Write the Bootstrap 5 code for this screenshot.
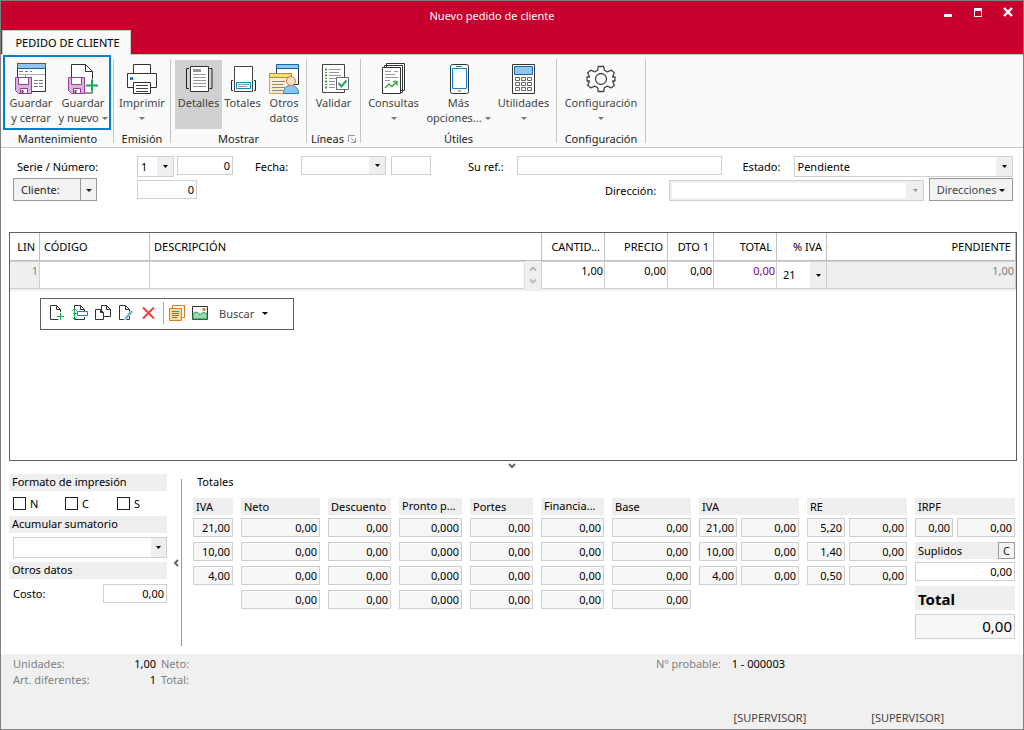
<!DOCTYPE html>
<html lang="es">
<head>
<meta charset="utf-8">
<meta name="viewport" content="width=device-width, initial-scale=1">
<title>Nuevo pedido de cliente</title>
<link href="https://cdn.jsdelivr.net/npm/bootstrap@5.3.0/dist/css/bootstrap.min.css" rel="stylesheet">
<style>
:root{--arrow:url("data:image/svg+xml,%3Csvg xmlns='http://www.w3.org/2000/svg' width='5' height='3'%3E%3Cpath d='M0 0h5L2.5 3z' fill='%23000'/%3E%3C/svg%3E");
--arrow-off:url("data:image/svg+xml,%3Csvg xmlns='http://www.w3.org/2000/svg' width='5' height='3'%3E%3Cpath d='M0 0h5L2.5 3z' fill='%23999'/%3E%3C/svg%3E")}
body{font:11px/15px "Noto Sans","Open Sans",sans-serif;color:#000;background:#fff}
svg{display:block;flex:none}
.app-window{border:1px solid #808080}
.title-bar{background:#c8002d;height:53px;color:#fff}
.title-bar h1{font-size:11px;line-height:15px;padding-left:50px;margin:7px 0 0}
.win-btn{width:30px;height:24px;border:0;background:none;padding:0;color:#fff}
.tab-btn{border:1px solid #c8c8c8;border-bottom:0;background:#fafafa;width:129px;height:25px;padding:0 0 2px 2px;margin-left:1px;margin-bottom:-1px;font-size:11px;position:relative}
.ribbon{background:#fafafa;border-top:1px solid #c6c6c6;border-bottom:1px solid #c6c6c6;height:94px;padding-left:1px}
.ribbon-sep{width:1px;background:#c6c6c6;margin:4px 0}
.ribbon-group{display:flex;flex-direction:column;justify-content:space-between}
.group-name{text-align:center;line-height:15px;color:#222;margin-bottom:1px}
.rb{border:0;background:none;padding:3px 0 0;margin-top:5px;height:69px;display:flex;flex-direction:column;align-items:center;color:#444;line-height:15px;white-space:nowrap}
.rb.on{background:#d0d0d0}
.hilite{border:2px solid #0082c8;display:flex;height:75px;margin:0 2px 0 1px}
.hilite .rb{margin-top:3px;width:52px}
.caret{display:inline-block;border:3px solid transparent;border-top-color:currentColor;border-bottom:0;vertical-align:2px}
.rb .caret{color:#777}
.fld{border:1px solid #d0d0d0;border-radius:0;background:#fff;height:19px;padding:0 2px 1px;font-size:11px;line-height:15px;color:#000;min-width:0;width:100%}
.num{text-align:right}
select.fld{appearance:none;height:21px;padding:0 16px 0 3px;background:var(--arrow) no-repeat right 5px center,linear-gradient(#efefef,#efefef) no-repeat right/16px 100%,#fff;opacity:1}
select.short{height:19px}
select.off{background:var(--arrow-off) no-repeat right 5px center,linear-gradient(#efefef,#efefef) no-repeat right/17px 100%,#fff;box-shadow:inset 0 0 0 2px #efefef}
.gray-btn{border:1px solid #999;background:#f3f3f3;padding:0;height:23px;color:#222;font-size:11px}
.first-col{width:124px}
.order-head label{padding-top:3px;white-space:nowrap}
.w37{width:37px}.w40{width:40px}.w56{width:56px}.w60{width:60px}.w85{width:85px}
.grow-fld{flex:1 1 0}
.grid-box{border:1px solid #606060;margin:0 6px 0 8px}
.lines{width:100%;table-layout:fixed;border-collapse:separate;border-spacing:0;border-bottom:2px solid #efefef}
.lines th{font-weight:400;height:28px;padding:0 4px 1px;border-right:1px solid #c0c0c0;border-bottom:1px solid #c0c0c0;white-space:nowrap;overflow:hidden;text-overflow:ellipsis}
.lines td{padding:0;height:28px;border-right:1px solid #d0d0d0}
.lines .fld{height:28px;display:block;border-width:1px 0 1px 0;padding-bottom:10px}
.lines input.num{padding-right:1px}
.lines select.fld{border-width:1px 0 1px 0;padding:0 16px 2px 6px}
.read{background:#efefef!important;color:#808080}
.spin{width:16px;background:#efefef}
.tool-strip{border:1px solid #606060;width:254px;height:32px;margin:7px 0 0 30px;padding:0 8px 2px;gap:7px}
.tool-strip button{border:0;background:none;padding:0;color:#444}
.bar-head{background:#eee;height:17px;line-height:15px;padding:0 3px;white-space:nowrap;overflow:hidden;text-overflow:ellipsis}
.low{line-height:18px}
.lower{min-height:184px;padding:4px 8px 8px}
.side{width:158px}
.side .check-box{appearance:none;width:13px;height:13px;border:1px solid #222;background:#fff;margin:0;border-radius:0}
.side .check-box:checked{background:#222}
.side label.opt{width:52px;gap:4px;flex:none}
.divider{width:15px;border-right:1px solid #999;margin-top:5px}
.divider button,.fold{border:0;background:none;padding:0}
.totals-grid{display:grid;grid-template-columns:40fr 79fr 63fr 63fr 63fr 63fr 79fr 100fr 100fr 100fr;column-gap:8px;margin-top:9px}
.tcol{display:grid;grid-template-rows:15px;grid-auto-rows:19px;row-gap:5px;align-content:start;min-width:0}
.tcol.irpf{grid-template-rows:15px 19px 15px 19px 23px 25px}
.tcol .fld{background:#f7f7f7;border-color:#d0d0d0}
.pair{display:grid;grid-template-columns:38fr 58fr;column-gap:4px}
.irpf .fld.open{background:#fff}
.status{background:#f0f0f0;height:75px;color:#808080}
.status b{font-weight:400;color:#000}
.stat-grid{display:grid;grid-template-columns:76px 62px auto;column-gap:5px;line-height:16px}
</style>
</head>
<body>
<div class="app-window min-vh-100 d-flex flex-column">
<header class="title-bar d-flex flex-column justify-content-between">
  <div class="d-flex">
    <h1 class="flex-grow-1 text-center fw-normal mb-0">Nuevo pedido de cliente</h1>
    <button class="win-btn" aria-label="Minimizar"><svg width="30" height="24"><path d="M11 13h8v3h-8z" fill="#fff"/></svg></button>
    <button class="win-btn" aria-label="Maximizar"><svg width="30" height="24"><path d="M11 7h8v9h-8zM12 10v5h6v-5z" fill="#fff" fill-rule="evenodd"/></svg></button>
    <button class="win-btn" aria-label="Cerrar"><svg width="30" height="24"><path d="M11 7l8 8M19 7l-8 8" stroke="#fff" stroke-width="2.4"/></svg></button>
  </div>
  <div><button class="tab-btn">PEDIDO DE CLIENTE</button></div>
</header>

<svg width="0" height="0" class="position-absolute"><defs>
  <g id="floppy"><path d="M.5.5h16v16H3.500L.5 13.500z" fill="#d9b3dc" stroke="#953f98"/><path d="M3.500.5h10v7h-10z" fill="#fff" stroke="#953f98"/><path d="M5.500 11.500h7v5h-7z" fill="#fff" stroke="#953f98"/><path d="M6.500 13h2v3h-2z" fill="#555"/></g>
  <g id="leaf"><path d="M.5 14.500V.5h6l4 4v10zM6.500.5v4h4" fill="#fff" stroke="#333"/></g>
</defs></svg>

<nav class="ribbon d-flex" aria-label="Cinta">
  <div class="ribbon-group">
    <div class="hilite">
      <button class="rb"><svg class="ico" width="32" height="32"><path d="M2.500.5h28v28h-28z" fill="#fff" stroke="#333"/><path d="M2.500.5h28v5h-28z" fill="#92c5ee" stroke="#1466ae"/><path d="M4 8.500h4m2 0h3m2 0h2M19 17.500h10M19 20.500h10M19 23.500h10" stroke="#777" stroke-dasharray="4 1"/><path d="M4 11.500h26M10.500 11v4" stroke="#aaa"/><use href="#floppy" y="14"/></svg>Guardar<br><span>y cerrar</span></button>
      <button class="rb"><svg class="ico" width="32" height="32"><path d="M4.500 15V1.500h14l7 7V30H18" fill="#fff" stroke="#333"/><path d="M18.500 1.500v7h7" fill="none" stroke="#333"/><use href="#floppy" x="1" y="14"/><path d="M18 22.500h13M24.500 16v13" stroke="#fafafa" stroke-width="5"/><path d="M19 22.500h12M25 16.500v12" stroke="#1ba85a" stroke-width="2"/></svg>Guardar<br><span>y nuevo <i class="caret"></i></span></button>
    </div>
    <div class="group-name">Mantenimiento</div>
  </div><div class="ribbon-sep"></div>
  <div class="ribbon-group" style="width:56px">
    <button class="rb"><svg class="ico" width="32" height="32"><path d="M7.500 10.500v-9h17v9M7.500 24.500h-6v-14h29v14h-6" fill="#fff" stroke="#333"/><path d="M7.500 19.500h17v11h-17z" fill="#fff" stroke="#333"/><path d="M10 22.500h12M10 25.500h12M10 28.500h12" stroke="#444"/><path d="M4 14h3v3H4z" fill="#1783d0"/></svg>Imprimir<br><span><i class="caret"></i></span></button>
    <div class="group-name">Emisión</div>
  </div><div class="ribbon-sep"></div>
  <div class="ribbon-group">
    <div class="d-flex" style="padding:0 1px 0 4px">
      <button class="rb on" style="width:47px"><svg class="ico" width="32" height="32"><path d="M7.500 3.500h18v25h-18z" fill="#fff" stroke="#333"/><path d="M10 6h8v3h-8z" fill="#999"/><path d="M10 11.500h13M10 14.500h13M10 17.500h13M10 20.500h13M10 23.500h13" stroke="#999"/><path d="M6 5.500H3.500v20H6M26.500 5.500h2.500v20h-2.500" fill="none" stroke="#222"/></svg>Detalles</button>
      <button class="rb" style="width:41px"><svg class="ico" width="32" height="32"><path d="M7.500 3.500h18v25h-18z" fill="#fff" stroke="#444"/><path d="M9.500 19.500h14v6h-14z" fill="#fff" stroke="#0090d0"/><path d="M11 21.500h11M11 23.500h9" stroke="#999"/><path d="M6 17.500H4.500v10H6M27 17.500h1.500v10H27" fill="none" stroke="#222"/></svg>Totales</button>
      <button class="rb" style="width:42px"><svg class="ico" width="32" height="32"><path d="M8.500 1.500h22v20h-22z" fill="#fff" stroke="#333"/><path d="M8.500 1.500h22v4h-22z" fill="#92c5ee" stroke="#1466ae"/><path d="M1.500 10.500h22v20h-22z" fill="#fcefd0" stroke="#d8a450"/><path d="M1.500 10.500h22v4h-22z" fill="#ffd978" stroke="#e07b20"/><path d="M4 18.500h13M4 21.500h11M4 24.500h13M4 27.500h11" stroke="#888"/><path d="M15.500 30.500c0-5 3-8 7.500-8s7.500 3 7.500 8z" fill="#92c5ee" stroke="#1783d0"/><circle cx="23" cy="18" r="4.500" fill="#f9ddc4" stroke="#d17a3a"/></svg>Otros<br><span>datos</span></button>
    </div>
    <div class="group-name">Mostrar</div>
  </div><div class="ribbon-sep"></div>
  <div class="ribbon-group" style="width:53px">
    <button class="rb"><svg class="ico" width="32" height="32"><path d="M4.500 1.500h22v28h-22z" fill="#fff" stroke="#444"/><path d="M7 6.500h2M7 12.500h2M7 18.500h2M7 24.500h2" stroke="#2ea836" stroke-width="2"/><path d="M7 9.500h2M7 15.500h2M7 21.500h2" stroke="#e04040"/><path d="M11 6.500h12M11 9.500h10M11 12.500h12M11 15.500h8M11 18.500h6M11 21.500h6M11 24.500h6" stroke="#999"/><path d="M18.500 14.500h12v12h-12z" fill="#fff" stroke="#666"/><path d="M20.500 20l3 3.500 5-6" fill="none" stroke="#1ba85a" stroke-width="2"/></svg>Validar</button>
    <div class="group-name d-flex justify-content-center align-items-center gap-1">Líneas <svg width="8" height="8"><path d="M.5 7V.5H7M7.500 3v4.500H3M3 3l4 4" fill="none" stroke="#999"/></svg></div>
  </div><div class="ribbon-sep"></div>
  <div class="ribbon-group" style="width:195px">
    <div class="d-flex">
      <button class="rb" style="width:65px"><svg class="ico" width="32" height="32"><path d="M8.500.5h18v27h-18z M6.500 2.500h18v27h-18z" fill="#fff" stroke="#333"/><path d="M4.500 4.500h18v26h-18z" fill="#fff" stroke="#333"/><path d="M7 8.500h6m3 0h4M7 11.500h10M7 14.500h13M7 17.500h5" stroke="#999"/><path d="M7 25l4-4 3 2.500 5-5M15 18.500h4v4" fill="none" stroke="#3bae3b" stroke-width="1.500"/></svg>Consultas<br><span><i class="caret"></i></span></button>
      <button class="rb" style="width:65px"><svg class="ico" width="32" height="32"><rect x="7.500" y="1.500" width="18" height="29" rx="2" fill="#fff" stroke="#333"/><path d="M9.500 5.500h14v20h-14z" fill="#fff" stroke="#1783d0"/><path d="M13 3.500h6M15 28h3" stroke="#666"/></svg>Más<br><span>opciones... <i class="caret"></i></span></button>
      <button class="rb" style="width:65px"><svg class="ico" width="32" height="32"><path d="M4.500 1.500h22v29h-22z" fill="#fff" stroke="#333"/><path d="M6.500 3.500h18v8h-18z" fill="#92c5ee" stroke="#1466ae"/><g fill="none" stroke="#666"><path d="M7.500 14.500h4v3h-4zM13.500 14.500h4v3h-4zM19.500 14.500h4v3h-4zM7.500 19.500h4v3h-4zM13.500 19.500h4v3h-4zM19.500 19.500h4v3h-4zM7.500 24.500h4v3h-4zM13.500 24.500h4v3h-4zM19.500 24.500h4v3h-4z"/></g></svg>Utilidades<br><span><i class="caret"></i></span></button>
    </div>
    <div class="group-name">Útiles</div>
  </div><div class="ribbon-sep"></div>
  <div class="ribbon-group" style="width:88px">
    <button class="rb"><svg class="ico" width="32" height="32"><path d="M12.700 7.200L13.200 3.500h5.600l.5 3.700 3 1.700 4-1.700 3 2.600-1.800 4.200H30v4h-2.500l1.800 4.200-3 2.600-4-1.700-3 1.700-.5 3.700h-5.600l-.5-3.700-3-1.700-4 1.700-3-2.600L4.500 18H2v-4h2.500L2.700 9.800l3-2.600 4 1.700z" fill="#fff" stroke="#444" stroke-width="1.300" stroke-linejoin="round"/><circle cx="16" cy="16" r="5.500" fill="#fafafa" stroke="#444" stroke-width="1.300"/></svg>Configuración<br><span><i class="caret"></i></span></button>
    <div class="group-name">Configuración</div>
  </div><div class="ribbon-sep"></div>
</nav>

<main class="flex-grow-1 d-flex flex-column">
<form class="order-head" style="padding:8px 10px 0 12px">
  <div class="d-flex align-items-start" style="height:22px">
    <label for="serie" class="first-col ps-1">Serie / Número:</label>
    <select id="serie" class="fld w37 flex-shrink-0"><option>1</option></select>
    <input class="fld num w56 flex-shrink-0" style="margin-left:3px" value="0" aria-label="Número">
    <label for="fecha" class="flex-shrink-0" style="width:68px;padding-left:22px">Fecha:</label>
    <select id="fecha" class="fld short w85 flex-shrink-0"><option></option></select>
    <input class="fld w40 flex-shrink-0" style="margin-left:5px" aria-label="Hora">
    <label for="ref" class="flex-shrink-0" style="width:86px;padding-left:37px">Su ref.:</label>
    <input id="ref" class="fld grow-fld">
    <label for="estado" class="flex-shrink-0" style="width:72px;padding-left:21px">Estado:</label>
    <select id="estado" class="fld grow-fld"><option>Pendiente</option></select>
  </div>
  <div class="d-flex align-items-start">
    <div class="first-col"><div class="d-flex">
      <button type="button" class="gray-btn" style="width:68px;text-align:left;padding-left:7px">Cliente:</button>
      <button type="button" class="gray-btn border-start-0" style="width:16px" aria-label="Abrir cliente"><i class="caret"></i></button></div></div>
    <input class="fld num w60" style="margin-top:2px" value="0" aria-label="Código de cliente">
    <label for="dir" class="ms-auto mt-1" style="width:64px;padding-top:1px">Dirección:</label>
    <select id="dir" class="fld off" style="width:255px;margin-top:2px" disabled><option></option></select>
    <button type="button" class="gray-btn" style="width:84px;margin-left:5px;color:#444">Direcciones <i class="caret text-black"></i></button>
  </div>
</form>

<section class="grid-box flex-grow-1" style="margin-top:31px">
  <table class="lines">
    <colgroup><col style="width:30px"><col style="width:110px"><col><col style="width:63px"><col style="width:63px"><col style="width:46px"><col style="width:63px"><col style="width:50px"><col style="width:189px"></colgroup>
    <thead><tr><th class="text-end">LIN</th><th>CÓDIGO</th><th>DESCRIPCIÓN</th><th class="text-end">CANTID...</th><th class="text-end">PRECIO</th><th class="text-end">DTO 1</th><th class="text-end">TOTAL</th><th class="text-end">% IVA</th><th class="text-end">PENDIENTE</th></tr></thead>
    <tbody><tr>
      <td><input class="fld num read" value="1" readonly aria-label="Línea"></td>
      <td><input class="fld" aria-label="Código"></td>
      <td><div class="d-flex"><input class="fld border-end" aria-label="Descripción"><div class="spin"><svg width="16" height="28"><path d="M5 9.500l3-3 3 3M5 18.500l3 3 3-3" fill="none" stroke="#bbb" stroke-width="2"/></svg></div></div></td>
      <td><input class="fld num" value="1,00" aria-label="Cantidad"></td>
      <td><input class="fld num" value="0,00" aria-label="Precio"></td>
      <td><input class="fld num" value="0,00" aria-label="Descuento 1"></td>
      <td><input class="fld num" style="color:#800080" value="0,00" aria-label="Total"></td>
      <td><select class="fld" aria-label="IVA"><option>21</option></select></td>
      <td><input class="fld num read" value="1,00" readonly aria-label="Pendiente"></td>
    </tr></tbody>
  </table>
  <div class="tool-strip d-flex align-items-center">
    <button aria-label="Nueva línea"><svg width="16" height="16"><use href="#leaf" x="1"/><path d="M7 11.500h9M11.500 7v9" stroke="#fff" stroke-width="4"/><path d="M8 11.500h7M11.500 8v7" stroke="#1ba85a"/></svg></button>
    <button aria-label="Insertar línea"><svg width="16" height="16"><path d="M2.500 6V.5h6l4 4V7M2.500 9v5.500h10V12M8.500.5v4h4" fill="#fff" stroke="#333"/><path d="M5.500 6.500h10v4h-10z" fill="#fff" stroke="#1783d0"/><path d="M2.500 3v11M.5 5.500l2-2 2 2M.5 12.500l2 2 2-2M1 8.500h4" fill="none" stroke="#1ba85a"/></svg></button>
    <button aria-label="Duplicar línea"><svg width="16" height="16"><path d="M6.500 11.500V.5h5l4 4v7zM11.500.5v4h4" fill="#fff" stroke="#333"/><path d="M.5 14.500v-10h5l3 3v7zM5.500 4.500v3h3" fill="#fff" stroke="#333"/></svg></button>
    <button aria-label="Modificar línea"><svg width="16" height="16"><use href="#leaf" x="1"/><path d="M6 15l1-3 6-7 2 2-6 7z" fill="#62a9e4" stroke="#fff" stroke-width=".6"/></svg></button>
    <button aria-label="Eliminar línea"><svg width="16" height="16"><path d="M2 2.500l11 11M13 2.500l-11 11" stroke="#ee3e3e" stroke-width="2"/></svg></button>
    <div style="width:1px;height:22px;background:#aaa;margin-left:-1px"></div>
    <button aria-label="Detalle" style="margin-left:-2px"><svg width="16" height="16"><path d="M3.500 3V.5h12v12H13" fill="none" stroke="#e07b20"/><path d="M.5 3.500h12v12H.5z" fill="#fcdc8a" stroke="#e07b20"/><path d="M3 6.500h7M3 8.500h7M3 10.500h7M3 12.500h5" stroke="#777"/></svg></button>
    <button aria-label="Imagen"><svg width="16" height="16"><path d="M.5 1.500h15v13H.5z" fill="#fff" stroke="#333"/><path d="M1 9c3-3 5-2 7 1 2-3 5-3 7-1v5H1z" fill="#9bd8b3" stroke="#1a9a50"/><circle cx="12" cy="4.500" r="1.800" fill="#e8803a"/></svg></button>
    <button class="ps-1 d-flex align-items-center gap-2">Buscar<i class="caret text-black"></i></button>
  </div>
</section>
<button class="fold mx-auto" aria-label="Plegar totales"><svg width="10" height="9"><path d="M2 3l3 3 3-3" fill="none" stroke="#666" stroke-width="2"/></svg></button>

<section class="lower d-flex">
  <form class="side flex-shrink-0">
    <div class="bar-head">Formato de impresión</div>
    <div class="d-flex ps-1" style="padding:5px 0">
      <label class="opt d-flex align-items-center"><input type="checkbox" class="check-box">N</label>
      <label class="opt d-flex align-items-center"><input type="checkbox" class="check-box">C</label>
      <label class="opt d-flex align-items-center"><input type="checkbox" class="check-box">S</label>
    </div>
    <label for="acum" class="bar-head d-block">Acumular sumatorio</label>
    <div class="ps-1 py-1"><select id="acum" class="fld d-block" style="background-size:5px 3px,15px 100%"><option></option></select></div>
    <div class="bar-head">Otros datos</div>
    <div class="d-flex justify-content-between align-items-center ps-1" style="margin-top:5px"><label for="costo">Costo:</label><input id="costo" class="fld num" style="width:64px" value="0,00"></div>
  </form>
  <div class="divider d-flex justify-content-end align-items-center flex-shrink-0"><button aria-label="Plegar panel"><svg width="8" height="10"><path d="M5 2L2 5l3 3" fill="none" stroke="#666" stroke-width="2"/></svg></button></div>
  <section class="flex-grow-1" style="padding-left:11px">
    <div class="ps-1 pe-1">Totales</div>
    <div class="totals-grid" id="totals"></div>
  </section>
</section>
</main>

<footer class="status d-flex flex-column justify-content-between">
  <div class="d-flex justify-content-between" style="padding:2px 238px 0 12px">
    <div class="stat-grid"><span>Unidades:</span><b class="text-end">1,00</b><span>Neto:</span><span class="text-nowrap">Art. diferentes:</span><b class="text-end">1</b><span>Total:</span></div>
    <div style="line-height:16px">Nº probable: <b class="ps-2">1 - 000003</b></div>
  </div>
  <div class="d-flex justify-content-end" style="gap:65px;padding:0 79px 4px;color:#444"><span>[SUPERVISOR]</span><span>[SUPERVISOR]</span></div>
</footer>
</div>

<script src="https://cdn.jsdelivr.net/npm/bootstrap@5.3.0/dist/js/bootstrap.bundle.min.js"></script>
<script>
const zero = ['0,00', '0,00', '0,00', '0,00'];
const rates = ['21,00', '10,00', '4,00'];
const columns = [
  ['IVA', rates], ['Neto', zero], ['Descuento', zero],
  ['Pronto p...', ['0,000', '0,000', '0,000', '0,000'], true],
  ['Portes', zero], ['Financia...', zero, true], ['Base', zero],
  ['IVA', rates.map(r => [r, '0,00'])],
  ['RE', ['5,20', '1,40', '0,50'].map(r => [r, '0,00'])]
];
const box = (v, name) => `<input class="fld num" readonly value="${v}" aria-label="${name}">`;
const cell = (v, name) => Array.isArray(v) ? `<div class="pair">${v.map(x => box(x, name)).join('')}</div>` : box(v, name);
document.getElementById('totals').innerHTML = columns.map(([name, rows, high]) =>
  `<div class="tcol"><div class="bar-head ${high ? '' : 'low'}">${name}</div>${rows.map(v => cell(v, name)).join('')}</div>`).join('') +
  `<div class="tcol irpf"><div class="bar-head low">IRPF</div>${cell(['0,00', '0,00'], 'IRPF')}
   <div class="bar-head low d-flex justify-content-between pe-0"><label for="sup">Suplidos</label><button class="gray-btn" style="width:17px;height:17px;line-height:14px">C</button></div>
   <input id="sup" class="fld num open" value="0,00">
   <label for="total" class="bar-head fw-bold" style="height:24px;font-size:15px;line-height:26px">Total</label>
   <input id="total" class="fld num" readonly value="0,00" style="height:25px;font-size:15px">
  </div>`;
</script>
</body>
</html>
